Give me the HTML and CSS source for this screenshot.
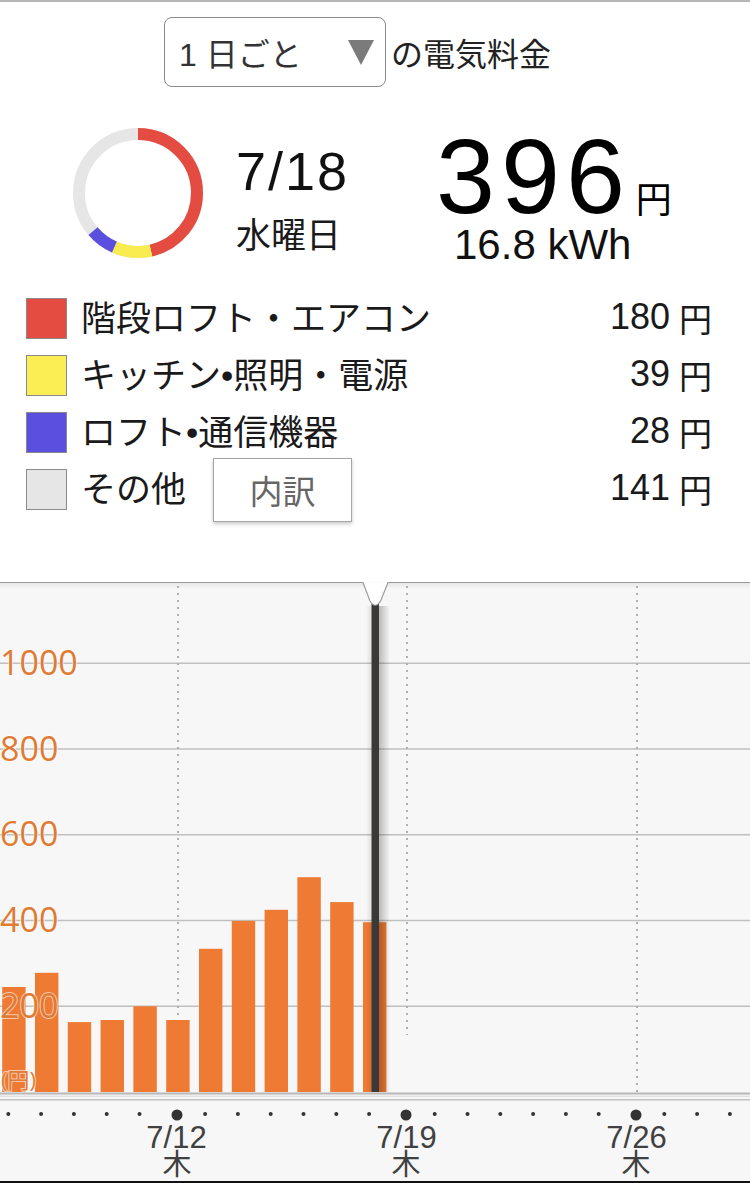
FILE: index.html
```html
<!DOCTYPE html>
<html lang="ja">
<head>
    <meta charset="UTF-8">
    <meta name="viewport" content="width=device-width, initial-scale=1.0">
    <title>電気料金</title>
    <link rel="stylesheet" href="styles.css">
</head>
<body>
    <div class="overview">
        <div class="period">
            <div class="period-select">
                <span>1 日ごと</span>
                <span class="period-arrow"></span>
            </div>
            <span class="period-label">の電気料金</span>
        </div>

        <div class="summary">
            <!-- share of the day per circuit: 180 / 39 / 28 / 141 -->
            <svg class="donut" width="130" height="130" viewBox="0 0 130 130">
                <g transform="rotate(-90 65 65)" fill="none" stroke-width="12">
                    <circle cx="65" cy="65" r="59" stroke="#e6e6e6"/>
                    <circle cx="65" cy="65" r="59" stroke="#e44c41" stroke-dasharray="172 400"/>
                    <circle cx="65" cy="65" r="59" stroke="#f8ec50" stroke-dasharray="37.3 400" stroke-dashoffset="-172"/>
                    <circle cx="65" cy="65" r="59" stroke="#5b4fe0" stroke-dasharray="26.8 400" stroke-dashoffset="-209.3"/>
                </g>
            </svg>
            <div class="day">
                <div class="day-date">7/18</div>
                <div class="day-week">水曜日</div>
            </div>
            <div class="total">
                <div class="total-amount">396<span class="total-yen">円</span></div>
                <div class="total-kwh">16.8 kWh</div>
            </div>
        </div>

        <ul class="legend">
            <li class="legend-row">
                <span class="swatch swatch-red"></span>
                <span class="legend-name">階段ロフト・エアコン</span>
                <span class="legend-price">180<span class="yen">円</span></span>
            </li>
            <li class="legend-row">
                <span class="swatch swatch-yellow"></span>
                <span class="legend-name">キッチン•照明・電源</span>
                <span class="legend-price">39<span class="yen">円</span></span>
            </li>
            <li class="legend-row">
                <span class="swatch swatch-blue"></span>
                <span class="legend-name">ロフト•通信機器</span>
                <span class="legend-price">28<span class="yen">円</span></span>
            </li>
            <li class="legend-row">
                <span class="swatch swatch-gray"></span>
                <span class="legend-name">その他</span>
                <button class="detail-btn">内訳</button>
                <span class="legend-price">141<span class="yen">円</span></span>
            </li>
        </ul>
    </div>

    <svg class="chart" width="750" height="601" viewBox="0 582 750 601">
        <defs>
            <linearGradient id="topShade" x1="0" y1="0" x2="0" y2="1">
                <stop offset="0" stop-color="#000" stop-opacity="0.07"/>
                <stop offset="1" stop-color="#000" stop-opacity="0"/>
            </linearGradient>
            <linearGradient id="shadeRight" x1="0" y1="0" x2="1" y2="0">
                <stop offset="0" stop-color="#000" stop-opacity="0.25"/>
                <stop offset="1" stop-color="#000" stop-opacity="0"/>
            </linearGradient>
            <linearGradient id="shadeLeft" x1="0" y1="0" x2="1" y2="0">
                <stop offset="0" stop-color="#000" stop-opacity="0"/>
                <stop offset="1" stop-color="#000" stop-opacity="0.1"/>
            </linearGradient>
        </defs>

        <rect x="0" y="582" width="750" height="601" fill="#f7f7f7"/>
        <rect x="0" y="583" width="750" height="6" fill="url(#topShade)"/>

        <!-- grid: 200 yen = 85.75px, zero at 1092 -->
        <g class="grid">
            <line x1="0" y1="663.25" x2="750" y2="663.25"/>
            <line x1="0" y1="749" x2="750" y2="749"/>
            <line x1="0" y1="834.75" x2="750" y2="834.75"/>
            <line x1="0" y1="920.5" x2="750" y2="920.5"/>
            <line x1="0" y1="1006.25" x2="750" y2="1006.25"/>
        </g>

        <g class="week-line">
            <line x1="178" y1="586" x2="178" y2="1092"/>
            <line x1="407" y1="586" x2="407" y2="1035"/>
            <line x1="637" y1="586" x2="637" y2="1092"/>
        </g>

        <g class="bars">
            <rect x="2.2" y="987" width="23.4" height="105"/>
            <rect x="35" y="972.8" width="23.4" height="119.2"/>
            <rect x="67.8" y="1022.1" width="23.4" height="69.9"/>
            <rect x="100.6" y="1020" width="23.4" height="72"/>
            <rect x="133.4" y="1006.25" width="23.4" height="85.75"/>
            <rect x="166.2" y="1020" width="23.4" height="72"/>
            <rect x="199" y="948.8" width="23.4" height="143.2"/>
            <rect x="231.8" y="920.9" width="23.4" height="171.1"/>
            <rect x="264.6" y="909.8" width="23.4" height="182.2"/>
            <rect x="297.4" y="877.2" width="23.4" height="214.8"/>
            <rect x="330.2" y="902.1" width="23.4" height="189.9"/>
            <rect x="363" y="922.2" width="23.4" height="169.8"/>
        </g>

        <g class="axis-y">
            <text x="0" y="675">1000</text>
            <text x="0" y="760.5">800</text>
            <text x="0" y="846">600</text>
            <text x="0" y="932">400</text>
            <text x="0" y="1018">200</text>
            <text class="axis-unit" x="1" y="1088">(円)</text>
        </g>

        <!-- selected day cursor -->
        <rect x="366" y="606" width="5.5" height="486" fill="url(#shadeLeft)"/>
        <rect x="379" y="606" width="11" height="486" fill="url(#shadeRight)"/>
        <rect x="371.5" y="604" width="7.5" height="488" fill="#3b3838"/>
        <path d="M363 582.5 L370 601 Q375.3 609.5 380.6 601 L388 582.5 Z" fill="#fff"/>
        <path d="M0 582.5 H363 L370 601 Q375.3 609.5 380.6 601 L388 582.5 H750" fill="none" stroke="#9c9c9c" stroke-width="1.2"/>

        <g class="baseline">
            <line x1="0" y1="1093.5" x2="750" y2="1093.5" stroke="#b7b7b7" stroke-width="2.2"/>
            <line x1="0" y1="1096.3" x2="750" y2="1096.3" stroke="#e2e2e2" stroke-width="1.5"/>
            <line x1="0" y1="1099.8" x2="750" y2="1099.8" stroke="#c2c2c2" stroke-width="1.6"/>
        </g>

        <g class="day-dots">
            <circle cx="8.3" cy="1114" r="2"/>
            <circle cx="41.1" cy="1114" r="2"/>
            <circle cx="73.9" cy="1114" r="2"/>
            <circle cx="106.7" cy="1114" r="2"/>
            <circle cx="139.5" cy="1114" r="2"/>
            <circle cx="177" cy="1115" r="5.5"/>
            <circle cx="205.1" cy="1114" r="2"/>
            <circle cx="237.9" cy="1114" r="2"/>
            <circle cx="270.7" cy="1114" r="2"/>
            <circle cx="303.5" cy="1114" r="2"/>
            <circle cx="336.3" cy="1114" r="2"/>
            <circle cx="369.1" cy="1114" r="2"/>
            <circle cx="406" cy="1115" r="5.5"/>
            <circle cx="434.7" cy="1114" r="2"/>
            <circle cx="467.5" cy="1114" r="2"/>
            <circle cx="500.3" cy="1114" r="2"/>
            <circle cx="533.1" cy="1114" r="2"/>
            <circle cx="565.9" cy="1114" r="2"/>
            <circle cx="598.7" cy="1114" r="2"/>
            <circle cx="636" cy="1115" r="5.5"/>
            <circle cx="664.3" cy="1114" r="2"/>
            <circle cx="697.1" cy="1114" r="2"/>
            <circle cx="729.9" cy="1114" r="2"/>
        </g>

        <g class="axis-x">
            <text x="176.5" y="1148">7/12</text>
            <text x="406.5" y="1148">7/19</text>
            <text x="636.5" y="1148">7/26</text>
            <text class="axis-week" x="177" y="1175">木</text>
            <text class="axis-week" x="406" y="1175">木</text>
            <text class="axis-week" x="636" y="1175">木</text>
        </g>

        <rect x="0" y="1181" width="750" height="2" fill="#111"/>
    </svg>
</body>
</html>
```

FILE: styles.css
```css
:root {
    --text-color: #1a1a1a;
    --border-gray: #8a8a8a;
    --bar-color: #ee7a33;
    --axis-orange: #e07b35;
}

* {
    margin: 0;
    padding: 0;
    box-sizing: border-box;
}

body {
    width: 750px;
    height: 1183px;
    overflow: hidden;
    background: #fff;
    border-top: 2px solid #b5b5b5;
    font-family: "Liberation Sans", "Noto Sans CJK JP", sans-serif;
    color: var(--text-color);
}

.overview {
    height: 580px;
}

/* period picker */
.period {
    display: flex;
    align-items: center;
    padding: 15px 0 0 164px;
}

.period-select {
    width: 222px;
    height: 70px;
    border: 1px solid var(--border-gray);
    border-radius: 8px;
    display: flex;
    align-items: center;
    justify-content: space-between;
    padding: 0 11px 0 14px;
    font-size: 32px;
    color: #333;
}

.period-arrow {
    width: 0;
    height: 0;
    border-left: 13px solid transparent;
    border-right: 13px solid transparent;
    border-top: 25px solid #7b7b7b;
}

.period-label {
    margin-left: 5px;
    font-size: 32px;
    color: #222;
}

/* day summary */
.summary {
    display: flex;
    height: 134px;
    margin-top: 41px;
    padding-left: 73px;
}

.donut {
    flex-shrink: 0;
}

.day {
    width: 106px;
    margin-left: 33px;
    padding-top: 16px;
}

.day-date {
    font-size: 54px;
    line-height: 54px;
    letter-spacing: 2px;
    color: #111;
}

.day-week {
    margin-top: 18px;
    font-size: 35px;
    line-height: 40px;
}

.total {
    margin-left: 94px;
    padding-top: 3px;
}

.total-amount {
    font-size: 106px;
    line-height: 90px;
    letter-spacing: 6px;
    color: #000;
}

.total-yen {
    margin-left: 5px;
    font-size: 36px;
    line-height: 1;
    letter-spacing: 0;
}

.total-kwh {
    margin-left: 18px;
    font-size: 42px;
    line-height: 48px;
    color: #111;
}

/* breakdown list */
.legend {
    list-style: none;
    margin-top: 36px;
    padding: 0 38px 0 26px;
    display: flex;
    flex-direction: column;
    gap: 16px;
}

.legend-row {
    display: flex;
    align-items: center;
    height: 41px;
}

.swatch {
    width: 41px;
    height: 41px;
    border: 1px solid var(--border-gray);
}

.swatch-red { background: #e44c41; }
.swatch-yellow { background: #fbee55; }
.swatch-blue { background: #5b4fe0; }
.swatch-gray { background: #e6e6e6; }

.legend-name {
    margin-left: 14px;
    font-size: 35px;
    line-height: 41px;
}

.legend-price {
    margin-left: auto;
    font-size: 36px;
    line-height: 41px;
}

.yen {
    margin-left: 9px;
    font-size: 33px;
    vertical-align: -3px;
}

.detail-btn {
    width: 139px;
    height: 64px;
    margin-left: 27px;
    border: 1px solid #a5a5a5;
    background: #fff;
    box-shadow: 0 2px 4px rgba(0, 0, 0, 0.22);
    font-family: inherit;
    font-size: 33px;
    color: #666;
}

/* chart */
.chart {
    display: block;
}

.grid line {
    stroke: #c0c0c0;
    stroke-width: 1.6;
}

.week-line line {
    stroke: #b0b0b0;
    stroke-width: 2;
    stroke-dasharray: 2 5;
}

.bars rect {
    fill: var(--bar-color);
}

.axis-y text {
    font-family: "Open Sans", "Noto Sans CJK JP", sans-serif;
    font-size: 34px;
    fill: var(--axis-orange);
    stroke: rgba(255, 255, 255, 0.6);
    stroke-width: 2px;
    paint-order: stroke;
}

.axis-y .axis-unit {
    font-size: 22px;
}

.day-dots circle {
    fill: #333;
}

.axis-x text {
    font-family: "Liberation Sans", sans-serif;
    font-size: 31px;
    fill: #404040;
    text-anchor: middle;
}

.axis-x .axis-week {
    font-family: "Noto Sans CJK JP", sans-serif;
    font-size: 29px;
}
```
